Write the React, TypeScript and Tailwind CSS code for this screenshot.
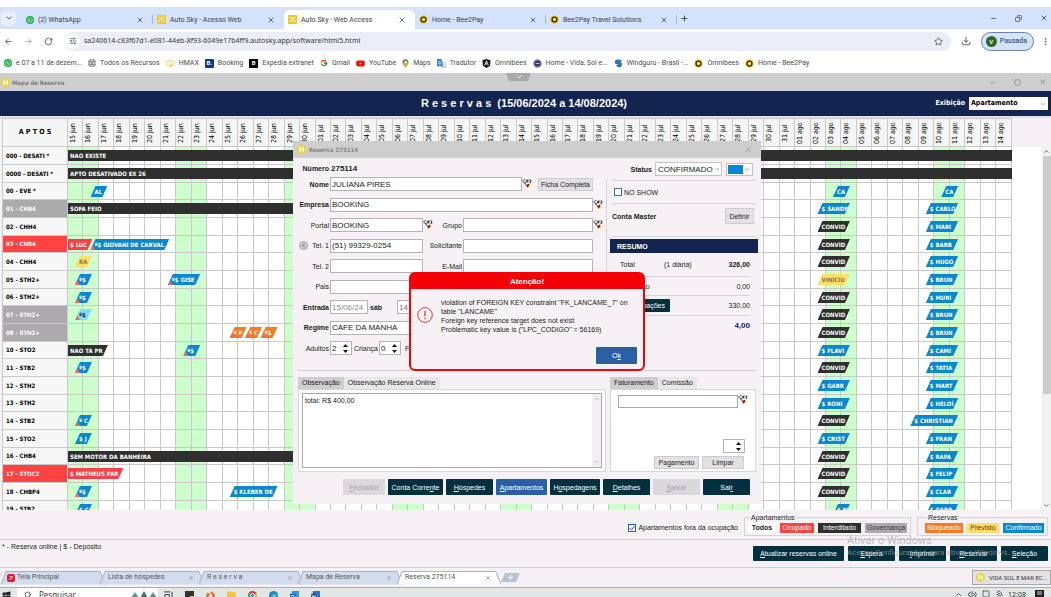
import type { ReactNode } from "react";
import { ArrowLeft, ArrowRight, ChevronDown, ChevronUp, Copy, Download, Globe, Minus, MoreVertical, Plus, RotateCw, Search, SlidersHorizontal, Square, Star, Volume2, Wifi, X } from "lucide-react";
import { FcGoogle } from "react-icons/fc";
import { FaWhatsapp, FaYoutube, FaWindows } from "react-icons/fa";
import { SiFirefoxbrowser } from "react-icons/si";

type Tone = "blue" | "black" | "red" | "orange" | "yellow" | "cyan";
type Shape = "slant" | "end" | "full";
interface Stay {
  day: number;
  span: number;
  text: string;
  tone: Tone;
  shape?: Shape;
  mark?: boolean;
}
interface Room {
  name: string;
  state?: "gray" | "red";
  stays: Stay[];
}

const days: string[] = [];
for (let i = 15; i <= 30; i++) days.push(`${i} jun`);
for (let i = 1; i <= 31; i++) days.push(`${String(i).padStart(2, "0")} jul`);
for (let i = 1; i <= 14; i++) days.push(`${String(i).padStart(2, "0")} ago`);

const toneClass: Record<Tone, string> = {
  blue: "bg-[#0988d0] text-white",
  black: "bg-[#2f2f2f] text-white",
  red: "bg-[#fb4048] text-white",
  orange: "bg-[#fb7a20] text-white",
  yellow: "bg-[#fbe065] text-[#857a4c]",
  cyan: "bg-[#82dcf8] text-[#12244f]",
};

const shapeClass: Record<Shape, string> = {
  slant: "left-[7px] pl-[4px] [clip-path:polygon(5px_0,100%_0,calc(100%-5px)_100%,0_100%)]",
  end: "left-0 pl-[2px] [clip-path:polygon(0_0,100%_0,calc(100%-5px)_100%,0_100%)]",
  full: "left-0 pl-[2px]",
};

const convid: Stay = { day: 48, span: 2.1, text: "CONVID", tone: "black" };
const aug2 = (text: string, tone: Tone = "blue"): Stay => ({ day: 48, span: 2.1, text, tone });
const aug9 = (text: string): Stay => ({ day: 55, span: 2.1, text, tone: "blue" });
const online: Stay = { day: 0, span: 1.1, text: "º$", tone: "blue", mark: true };

const rooms: Room[] = [
  { name: "000 - DESATI *", stays: [{ day: 0, span: 61, text: "NAO EXISTE", tone: "black", shape: "full" }] },
  { name: "0000 - DESATI *", stays: [{ day: 0, span: 61, text: "APTO DESATIVADO EX 26", tone: "black", shape: "full" }] },
  { name: "00 - EVE *", stays: [{ day: 1, span: 1.1, text: "AL", tone: "blue" }, { day: 49, span: 1.1, text: "CA", tone: "blue" }, { day: 56, span: 1.1, text: "CA", tone: "blue" }] },
  { name: "01 - CHB4", state: "gray", stays: [{ day: 0, span: 20, text: "SOFA FEIO", tone: "black", shape: "full" }, aug2("$ SANDR"), aug9("$ CARLO")] },
  { name: "02 - CHH4", stays: [convid, aug9("$ MARI")] },
  { name: "03 - CHB4", state: "red", stays: [{ day: 0, span: 1.55, text: "$ LUC", tone: "red", shape: "end" }, { day: 1, span: 5.1, text: "º$ GIOVANI DE CARVAL", tone: "blue", mark: true }, convid, aug9("$ BARB")] },
  { name: "04 - CHH4", stays: [{ day: 0, span: 1.1, text: "RA", tone: "yellow" }, convid, aug9("$ HUGO")] },
  { name: "05 - STH2+", stays: [online, { day: 6, span: 2.1, text: "º$ GISE", tone: "blue", mark: true }, aug2("VINÍCIU", "yellow"), aug9("$ BRUN")] },
  { name: "06 - STH2+", stays: [online, convid, aug9("$ MURI")] },
  { name: "07 - STH2+", state: "gray", stays: [{ ...online, tone: "cyan" }, convid, aug9("$ BRUN")] },
  { name: "08 - STH2+", state: "gray", stays: [{ ...online, day: 10, tone: "orange", text: "º P" }, { ...online, day: 11, tone: "orange", text: "º C" }, { ...online, day: 12, tone: "orange" }, convid, aug9("$ BRUN")] },
  { name: "10 - STO2", stays: [{ day: 0, span: 2.55, text: "NAO TA PR", tone: "black", shape: "end" }, { ...online, day: 7 }, aug2("$ FLAVI"), aug9("$ CAMI")] },
  { name: "11 - STB2", stays: [online, convid, aug9("$ TATIA")] },
  { name: "12 - STH2", stays: [aug2("$ GABR"), aug9("$ MART")] },
  { name: "13 - STH2", stays: [aug2("$ RONI"), aug9("$ HELOÍ")] },
  { name: "14 - STB2", stays: [{ ...online, text: "º C" }, convid, { day: 54, span: 3.1, text: "$ CHRISTIAN", tone: "blue" }] },
  { name: "15 - STO2", stays: [{ ...online, text: "$ J", mark: false }, aug2("$ CRIST"), aug9("$ FRAN")] },
  { name: "16 - CHB4", stays: [{ day: 0, span: 20, text: "SEM MOTOR DA BANHEIRA", tone: "black", shape: "full" }, convid, aug9("$ RAFA")] },
  { name: "17 - STOC2", state: "red", stays: [{ day: 0, span: 3.55, text: "$ MATHEUS PAR", tone: "red", shape: "end" }, convid, aug9("$ FELIP")] },
  { name: "18 - CHBP4", stays: [online, { day: 10, span: 3.1, text: "$ KLEBER DE", tone: "blue" }, convid, aug9("$ CLAR")] },
  { name: "19 - STB2", stays: [{ ...online, text: "$ C", mark: false }, { day: 49, span: 1.1, text: "$ M", tone: "blue" }, aug9("$ GABR")] },
];

function StayBar({ stay }: { stay: Stay }) {
  return (
    <span
      className={`absolute top-[3px] z-10 block h-[11px] overflow-hidden text-left leading-[11px] whitespace-nowrap ${toneClass[stay.tone]} ${shapeClass[stay.shape ?? "slant"]}`}
      style={{ width: `calc(${stay.span * 100}% + ${Math.round(stay.span)}px)` }}
    >
      {stay.mark && <span className="absolute bottom-0 left-0 h-[5px] w-[5px] bg-[#f4665e] [clip-path:polygon(40%_0,100%_100%,0_100%)]" />}
      {stay.text}
    </span>
  );
}

function ReservationMap() {
  return (
    <table className="w-full table-fixed border-separate border-spacing-0 border-t border-l border-[#c9c9c9] font-['DejaVu_Sans_Condensed','DejaVu_Sans',sans-serif] text-[6px] font-bold text-black">
      <thead>
        <tr className="h-[28px] bg-[#f5f5f5]">
          <th className="w-[65px] border-r border-b border-[#c9c9c9] p-0 text-[7px]">A P T O S</th>
          {days.map((d) => (
            <th key={d} className="border-r border-b border-[#c9c9c9] p-0">
              <span className="mx-auto block h-[24px] rotate-180 text-[7px] leading-[10px] font-normal whitespace-nowrap [writing-mode:vertical-rl]">{d}</span>
            </th>
          ))}
        </tr>
      </thead>
      <tbody>
        {rooms.map((room, r) => (
          <tr key={room.name} className={r % 3 === 2 ? "h-[17px]" : "h-[18px]"}>
            <th
              scope="row"
              className={`border-r border-b border-[#c9c9c9] p-0 pl-[3px] text-left leading-[12px] whitespace-nowrap ${room.state === "gray" ? "bg-[#acaaad] text-white" : room.state === "red" ? "bg-[#ff4242] text-white" : "bg-[#f7f7f7]"}`}
            >
              {room.name}
            </th>
            {days.map((d, i) => (
              <td key={d} className={`relative border-r border-b border-[#c9c9c9] p-0 ${i % 7 < 2 ? "bg-[#ccffcc]" : "bg-white"}`}>
                {room.stays.filter((s) => s.day === i).map((s) => <StayBar key={s.text} stay={s} />)}
              </td>
            ))}
          </tr>
        ))}
      </tbody>
    </table>
  );
}

function HotelLogo() {
  return (
    <svg viewBox="0 0 10 10" className="size-[9px] shrink-0">
      <circle cx="5" cy="5" r="5" fill="#efd32e" />
      <path d="M3 2v6M7 2v6M3 5h4" stroke="#fff" strokeWidth="1.5" />
    </svg>
  );
}

function SkyLogo() {
  return (
    <svg viewBox="0 0 10 10" className="size-[9px] shrink-0">
      <rect width="10" height="10" fill="#f7c51c" />
      <path d="M2 2l3 3 3-3M5 5v3M1 6l2 1M9 6l-2 1" stroke="#fff" strokeWidth="1.2" fill="none" />
    </svg>
  );
}

function BeeLogo() {
  return (
    <svg viewBox="0 0 10 10" className="size-[9px] shrink-0">
      <path d="M5 0l2 1 2 1 .6 3L9 8 7 9.300 5 10 3 9.300 1 8 .4 5 1 2l2-1z" fill="#f3c915" />
      <circle cx="5" cy="5" r="2.700" fill="#ffe14a" stroke="#3b2b0b" strokeWidth="1.500" />
    </svg>
  );
}

function Whats() {
  return <FaWhatsapp className="size-[8px] shrink-0 rounded-full bg-[#1fae4b] p-px text-white" />;
}

function BrowserTab({ icon, title, active, divider }: { icon: ReactNode; title: string; active?: boolean; divider?: boolean }) {
  return (
    <div className={`flex h-[19px] max-w-[131px] flex-1 items-center self-end ${active ? "rounded-t-[6px] bg-white" : ""}`}>
      <div className="flex min-w-0 flex-1 items-center gap-[4px] pr-[8px] pl-[4px]">
        {icon}
        <span className="flex-1 truncate text-[7px] leading-[10px] text-[#3b4048]">{title}</span>
        <button aria-label="Fechar guia"><X className="size-[8px] text-[#222]" /></button>
      </div>
      <span className={`h-[9px] w-px ${divider ? "bg-[#9dbaf0]" : ""}`} />
    </div>
  );
}

function Bookmark({ icon, text }: { icon: ReactNode; text: string }) {
  return (
    <a href="#" className="flex shrink-0 items-center gap-[4px] text-[7px] leading-[10px] text-[#4a4d52]">
      {icon}
      {text}
    </a>
  );
}

function Browser() {
  return (
    <header className="shrink-0 bg-white pt-[7px] font-['Roboto','Noto_Sans',sans-serif]">
      <div className="flex h-[22px] items-center bg-[#d3e3fd]">
        <button aria-label="Pesquisar guias" className="mr-[6px] ml-px flex size-[15px] items-center justify-center rounded-[5px] bg-[#e8f0fe]"><ChevronDown className="size-[8px]" /></button>
        <div className="flex min-w-0 flex-1 self-stretch">
          <BrowserTab icon={<Whats />} title="(2) WhatsApp" divider />
          <BrowserTab icon={<SkyLogo />} title="Auto.Sky - Acesso Web" />
          <BrowserTab icon={<SkyLogo />} title="Auto.Sky - Web Access" active />
          <BrowserTab icon={<BeeLogo />} title="Home - Bee2Pay" divider />
          <BrowserTab icon={<BeeLogo />} title="Bee2Pay Travel Solutions" divider />
          <button aria-label="Nova guia" className="ml-[3px]"><Plus className="size-[9px]" /></button>
        </div>
        <div className="flex items-center gap-[18px] pr-[3px]">
          <Minus className="size-[7px]" />
          <Copy className="size-[7px] -scale-x-100" />
          <X className="size-[8px]" />
        </div>
      </div>
      <div className="flex h-[24px] items-center text-[#45484d]">
        <div className="flex w-[64px] items-center gap-[11px] pl-[4px]">
          <ArrowLeft className="size-[9px]" />
          <ArrowRight className="size-[9px] text-[#999]" />
          <RotateCw className="size-[9px]" />
        </div>
        <div className="flex h-[19px] flex-1 items-center rounded-full bg-[#ebeef9] pr-[8px] pl-px">
          <span className="mr-[4px] flex size-[15px] items-center justify-center rounded-full bg-white"><SlidersHorizontal className="size-[8px]" /></span>
          <input aria-label="Endereço" className="min-w-0 flex-1 bg-transparent font-['Noto_Sans',sans-serif] text-[7px] leading-[12px] text-[#33363b] outline-none" defaultValue="sa240614-c83f67d1-e081-44eb-8f93-6049e17b4ff9.autosky.app/software/html5.html" />
          <Star className="size-[9px]" />
        </div>
        <Download className="mx-[10px] size-[10px]" />
        <button className="mr-[7px] flex h-[19px] items-center gap-[3px] rounded-full border border-[#6f85a8] bg-[#d3e3fd] pr-[6px] pl-[4px] text-[7px] font-medium text-[#35558f]">
          <span className="flex size-[11px] items-center justify-center rounded-full bg-[#2d6a22] text-[6px] text-white">V</span>
          Pausada
        </button>
        <MoreVertical className="mr-[1px] size-[9px]" />
      </div>
      <nav className="flex h-[20px] items-center gap-[6px] pl-[4px]">
        <Bookmark icon={<Whats />} text="e 07 a 11 de dezem..." />
        <Bookmark icon={<Globe className="size-[8px] rounded-full bg-[#55585c] text-white" />} text="Todos os Recursos" />
        <Bookmark icon={<svg viewBox="0 0 10 8" className="h-[7px] w-[9px]"><path d="M3 6H2a2 2 0 010-4 3 3 0 015.500 0A2 2 0 018 6H6M5 3.500V8M3.500 6L5 8l1.500-2" fill="none" stroke="#efc32b" /></svg>} text="HMAX" />
        <Bookmark icon={<span className="flex size-[9px] items-center justify-center rounded-[1px] bg-[#0b3a8c] text-[6px] font-bold text-white">B.</span>} text="Booking" />
        <Bookmark icon={<span className="flex size-[9px] items-center justify-center bg-black text-[6px] font-bold text-white">B</span>} text="Expedia extranet" />
        <Bookmark icon={<FcGoogle className="size-[8px]" />} text="Gmail" />
        <Bookmark icon={<FaYoutube className="size-[9px] text-[#ff0000]" />} text="YouTube" />
        <Bookmark icon={<svg viewBox="0 0 8 10" className="h-[9px] w-[7px]"><path d="M4 10C3 7 .5 6 .5 3.500A3.500 3.500 0 014 0z" fill="#2b8de0" /><path d="M4 10c1-3 3.500-4 3.500-6.500A3.500 3.500 0 004 0z" fill="#35a853" /><path d="M1 5.500L5 1.500 7 5 4 10z" fill="#fbbc04" opacity=".8" /><path d="M.7 2.500L4 0l1 1-3 3z" fill="#ea4335" /><circle cx="4" cy="3.500" r="1.300" fill="#fff" /></svg>} text="Maps" />
        <Bookmark icon={<svg viewBox="0 0 10 10" className="size-[9px]"><path d="M3 3h7v7H5z" fill="#c9d3e3" /><path d="M0 0h5l2 8H0z" fill="#3f7de8" /><path d="M4.500 3.500A1.500 1.500 0 104.500 5H3M6.500 5h3M8 4v1L6.500 8M7 6l2 2" stroke="#fff" strokeWidth=".7" fill="none" /></svg>} text="Tradutor" />
        <Bookmark icon={<svg viewBox="0 0 10 10" className="size-[9px]"><path d="M5 0l4.500 1.500L9 7.500 5 10 1 7.500.5 1.500z" fill="#151515" /><path d="M3 7l2-5 2 5M4 5.500h2" stroke="#fff" fill="none" /></svg>} text="Omnibees" />
        <Bookmark icon={<svg viewBox="0 0 10 10" className="size-[9px]"><circle cx="5" cy="5" r="4" fill="#3c3877" stroke="#8a7f9a" strokeWidth="1.500" /><path d="M3 5h4" stroke="#d9cfe8" /></svg>} text="Home - Vida, Sol e..." />
        <Bookmark icon={<svg viewBox="0 0 10 10" className="size-[9px]"><path d="M1 2q4-3 8 0L7 3l2 2-1 4Q4 10 2 7l3-1-4-1z" fill="#2676bf" /></svg>} text="Windguru - Brasil -..." />
        <Bookmark icon={<BeeLogo />} text="Omnibees" />
        <Bookmark icon={<BeeLogo />} text="Home - Bee2Pay" />
      </nav>
    </header>
  );
}

function LookupIcon() {
  return (
    <svg viewBox="0 0 11 11" className="size-[10px] shrink-0">
      <rect x="5" y="6" width="5" height="4" fill="#f8efa0" />
      <path d="M.5 2l3-1.500L5 2 3.500 5zM2 3l3 4" stroke="#444" fill="#fff" strokeWidth=".9" />
      <path d="M4.500 7l3-2 .8 2-2.300 2.500z" fill="#8e1717" />
      <path d="M5.500 4V1.200H7.500M5.500 2.600H7M8.300 1.200H10L9 2.400q1.300.2.900 1.200-.6.700-1.700.2" stroke="#111" strokeWidth=".9" fill="none" />
    </svg>
  );
}

function Field({ id, label, bold, value = "", className = "flex-1", labelWidth = "w-[32px]", muted }: { id: string; label: string; bold?: boolean; value?: string; className?: string; labelWidth?: string; muted?: boolean }) {
  return (
    <>
      <label htmlFor={id} className={`${labelWidth} flex shrink-0 justify-end whitespace-nowrap ${bold ? "font-bold" : ""}`}>{label}</label>
      <input id={id} defaultValue={value} className={`ml-px h-[14px] min-w-0 border border-[#b5b3b7] bg-white px-px text-[8px] outline-none ${muted ? "text-[#8a8a8a]" : "text-[#222]"} ${className}`} />
    </>
  );
}

function Spin({ id, value }: { id: string; value: string }) {
  return (
    <span className="flex h-[14px] w-[22px] items-center justify-between border border-[#b5b3b7] bg-white px-px">
      <input id={id} aria-label={id} defaultValue={value} className="w-[10px] bg-transparent text-[8px] outline-none" />
      <svg viewBox="0 0 5 9" className="mr-[2px] h-[9px] w-[5px]"><path d="M2.500 0L5 3H0zM0 6h5L2.500 9z" fill="#111" /></svg>
    </span>
  );
}

function DarkButton({ children, className = "", look = "dark" }: { children: ReactNode; className?: string; look?: "dark" | "blue" | "off" }) {
  const tone = look === "blue" ? "bg-[#2b5fa4] text-white" : look === "off" ? "bg-[#dad8da] text-[#a4a2a6]" : "bg-[#03303f] text-white";
  return <button className={`flex items-center justify-center rounded-[1px] text-[7px] leading-[9px] font-medium whitespace-pre ${tone} ${className}`}>{children}</button>;
}

const lightButton = "border border-[#cfccd0] bg-[#e3e0e4] text-[7px] leading-[9px] whitespace-nowrap";

function ReservationForm() {
  return (
    <div className="pt-[5px]">
      <div className="flex h-[10px] items-center text-[7px] font-bold"><span className="flex w-[32px] shrink-0 justify-end">Número</span><span className="pl-[2px] text-[8px]">275114</span></div>
      <div className="mt-[4px] flex h-[178px] flex-col justify-between">
        <div className="flex h-[14px] items-center">
          <Field id="nome" label="Nome" bold value="JULIANA PIRES" className="w-[192px]" />
          <LookupIcon />
          <button className={`ml-[6px] h-[13px] flex-1 ${lightButton}`}>Ficha Completa</button>
          <span className="w-[10px]" />
        </div>
        <div className="flex h-[14px] items-center"><Field id="empresa" label="Empresa" bold value="BOOKING" /><LookupIcon /></div>
        <div className="flex h-[14px] items-center">
          <Field id="portal" label="Portal" value="BOOKING" className="w-[93px]" /><LookupIcon />
          <Field id="grupo" label="Grupo" labelWidth="w-[29px]" /><LookupIcon />
        </div>
        <div className="flex h-[14px] items-center">
          <svg viewBox="0 0 9 9" className="mr-[-11px] ml-[2px] size-[9px] shrink-0"><circle cx="4.500" cy="4.500" r="4" fill="#cfcdd0" stroke="#a5a3a6" /><path d="M3 3q0 3 3 3M4 4l2-1" stroke="#888" fill="none" /></svg>
          <Field id="tel1" label="Tel. 1" value="(51) 99329-0254" className="w-[93px]" />
          <Field id="solicitante" label="Solicitante" labelWidth="w-[39px]" /><span className="w-[10px]" />
        </div>
        <div className="flex h-[14px] items-center">
          <Field id="tel2" label="Tel. 2" className="w-[93px]" />
          <Field id="email" label="E-Mail" labelWidth="w-[39px]" /><span className="w-[10px]" />
        </div>
        <div className="flex h-[14px] items-center"><Field id="pais" label="Pais" className="w-[93px]" /></div>
        <div className="flex h-[14px] items-center">
          <Field id="entrada" label="Entrada" bold value="15/06/24" className="w-[38px]" muted />
          <span className="w-[29px] pl-[2px] font-bold">sáb</span>
          <input aria-label="Hora" defaultValue="14:00" className="h-[14px] w-[30px] border border-[#b5b3b7] bg-white px-px text-[8px] text-[#777]" />
        </div>
        <div className="flex h-[14px] items-center"><Field id="regime" label="Regime" bold value="CAFE DA MANHA" className="w-[140px]" /></div>
        <div className="flex h-[14px] items-center gap-px">
          <label htmlFor="Adultos" className="w-[32px] text-right">Adultos</label><Spin id="Adultos" value="2" />
          <label htmlFor="Criança" className="w-[25px] text-right">Criança</label><Spin id="Criança" value="0" />
          <span className="pl-[3px]">Faixa</span>
        </div>
      </div>
    </div>
  );
}

function SummaryPane() {
  return (
    <div className="flex w-[148px] shrink-0 flex-col">
      <div className="flex h-[20px] items-center justify-end pr-[5px] pt-[2px]">
        <label htmlFor="status" className="pr-[3px] font-bold">Status</label>
        <span className="relative flex h-[14px] w-[67px] items-center border border-[#c5c3c7] bg-white">
          <select id="status" className="w-full appearance-none overflow-hidden pr-[8px] pl-[2px] text-[8px] outline-none"><option>CONFIRMADO</option></select>
          <ChevronDown className="absolute right-0 size-[8px] bg-white text-[#888]" strokeWidth={1.5} />
        </span>
        <button aria-label="Cor" className="ml-[4px] flex h-[13px] w-[27px] items-center justify-between border border-[#c5c3c7] bg-white px-px"><span className="h-[9px] w-[15px] bg-[#0988d0]" /><ChevronDown className="size-[8px] text-[#888]" strokeWidth={1.5} /></button>
      </div>
      <label className="mx-[2px] mt-[2px] flex h-[24px] items-center gap-[2px] border-y border-[#d6d3d7] pl-[2px]">
        <input type="checkbox" className="size-[8px] appearance-none border border-[#3c6ea5] bg-white" />NO SHOW
      </label>
      <div className="mx-[2px] flex h-[33px] items-start justify-between border-b border-[#d6d3d7] pt-[4px] pr-[2px] font-bold">
        <span className="pt-[4px]">Conta Master</span><button className={`h-[16px] w-[29px] font-normal ${lightButton}`}>Definir</button>
      </div>
      <h3 className="mt-[2px] flex h-[14px] items-center bg-[#12244f] pl-[7px] text-[7px] font-bold text-white">RESUMO</h3>
      <dl className="mx-[8px] flex flex-col">
        <div className="flex h-[24px] items-center border-b border-[#d6d3d7] pl-[2px]"><dt className="w-[44px]">Total</dt><dd className="flex-1">(1 diária)</dd><dd className="font-bold">326,00</dd></div>
        <div className="flex h-[19px] items-center justify-between border-b border-[#d6d3d7] pl-[2px]"><dt>Desconto</dt><dd>0,00</dd></div>
        <div className="flex h-[20px] items-center justify-between border-b border-[#d6d3d7]"><dt><DarkButton className="h-[13px] w-[52px] font-bold">Antecipações</DarkButton></dt><dd>330,00</dd></div>
        <div className="flex h-[18px] items-center justify-end text-[8px] font-bold text-[#17178c]"><dd>4,00</dd></div>
      </dl>
    </div>
  );
}

function PaneTabs({ first, second }: { first: string; second: string }) {
  return (
    <div role="tablist" className="flex h-[12px]">
      <button role="tab" aria-selected="true" className="bg-[#cfcdd0] px-[4px] leading-[12px]">{first}</button>
      <button role="tab" aria-selected="false" className="bg-[#e9e6ea] px-[4px] leading-[12px]">{second}</button>
    </div>
  );
}

function ErrorBox() {
  return (
    <div role="alertdialog" aria-label="Atenção!" className="absolute top-[131px] left-[116px] z-30 w-[236px] rounded-[6px] border-2 border-[#f40009] bg-[#f6f1f5]">
      <h2 className="flex h-[15px] items-center justify-center bg-[#f40009] text-[8px] font-bold text-white">Atenção!</h2>
      <div className="flex items-start pt-[9px] pl-[6px]">
        <svg viewBox="0 0 16 16" className="mt-[9px] mr-[8px] size-[16px] shrink-0"><circle cx="8" cy="8" r="7.300" fill="none" stroke="#ea3840" /><path d="M8 4v5.500M8 11v1.300" stroke="#ea3840" strokeWidth="1.300" /></svg>
        <p className="text-[7px] leading-[9px] text-[#222]">
          violation of FOREIGN KEY constraint "FK_LANCAME_7" on<br />table "LANCAME"<br />Foreign key reference target does not exist<br />Problematic key value is ("LPC_CODIGO" = 56169)
        </p>
      </div>
      <div className="flex justify-end pt-[13px] pr-[6px] pb-[5px]"><DarkButton look="blue" className="h-[17px] w-[41px]">O<u>k</u></DarkButton></div>
    </div>
  );
}

function ReservationWindow() {
  return (
    <section aria-label="Reserva 275114" className="absolute top-[23px] left-[293px] z-20 flex h-[363px] w-[468px] flex-col bg-[#f6f1f5] text-[7px] leading-[9px] text-[#222]">
      <div className="flex h-[17px] shrink-0 items-center gap-[3px] bg-[#cecece] pr-[8px] pl-[4px] font-['DejaVu_Sans_Condensed','DejaVu_Sans',sans-serif] text-[6px] font-bold text-[#858585]">
        <HotelLogo /><span className="flex-1">Reserva 275114</span><X className="size-[9px]" strokeWidth={1.5} />
      </div>
      <div className="flex h-[212px] pr-[3px] pl-[4px]">
        <div className="w-[306px]"><ReservationForm /></div>
        <span className="mt-[21px] mr-[3px] ml-[3px] w-px bg-[#d6d3d7]" />
        <SummaryPane />
      </div>
      <div className="mx-[5px] flex gap-[4px] border-t border-[#d0cdd1] pt-[6px]">
        <div className="flex-1">
          <PaneTabs first="Observação" second="Observação Reserva Online" />
          <div className="h-[83px] border border-[#d9d6da] bg-white p-[3px]">
            <div className="flex h-full border border-[#aaa8ab]">
              <textarea aria-label="Observação" className="min-w-0 flex-1 resize-none overflow-hidden p-[2px] outline-none" defaultValue="total: R$ 400,00" />
              <div className="flex w-[9px] flex-col items-center justify-between bg-[#f1eff1] py-[2px] text-[#888]"><ChevronUp className="size-[6px]" /><ChevronDown className="size-[6px]" /></div>
            </div>
          </div>
        </div>
        <div className="w-[146px]">
          <PaneTabs first="Faturamento" second="Comissão" />
          <div className="flex h-[83px] flex-col items-end border border-[#d9d6da] bg-white pt-[5px] pr-[7px]">
            <div className="flex items-start"><input aria-label="Faturamento" className="h-[13px] w-[120px] border border-[#aaa8ab]" /><LookupIcon /></div>
            <div className="mt-[31px] mr-[3px]"><Spin id="Parcelas" value="" /></div>
            <div className="mt-[3px] mr-[4px] flex gap-[3px]"><button className={`h-[13px] w-[45px] ${lightButton}`}>Pagamento</button><button className={`h-[13px] w-[42px] ${lightButton}`}>Limpar</button></div>
          </div>
        </div>
      </div>
      <div className="flex gap-[3px] pt-[7px] pr-[10px] pl-[50px]">
        <DarkButton look="off" className="h-[16px] w-[42px]">  <u>F</u>echadur</DarkButton>
        <DarkButton className="h-[16px] w-[55px]">Conta Corre<u>n</u>te</DarkButton>
        <DarkButton className="h-[16px] w-[47px]"><u>H</u>óspedes</DarkButton>
        <DarkButton look="blue" className="h-[16px] w-[51px]"><u>A</u>partamentos</DarkButton>
        <DarkButton className="h-[16px] w-[50px]">H<u>o</u>spedagens</DarkButton>
        <DarkButton className="h-[16px] w-[47px]"><u>D</u>etalhes</DarkButton>
        <DarkButton look="off" className="h-[16px] w-[47px]"><u>S</u>alvar</DarkButton>
        <DarkButton className="h-[16px] w-[47px]">Sai<u>r</u></DarkButton>
      </div>
      <ErrorBox />
    </section>
  );
}

function Legend({ title, items, pad }: { title: string; items: [string, string][]; pad: string }) {
  return (
    <fieldset className={`border border-[#d6d3d7] pt-[2px] pb-[2px] ${pad}`}>
      <legend className="ml-[2px] px-px text-[7px] leading-[7px]">{title}</legend>
      <div className="flex gap-[4px]">
        {items.map(([name, cls]) => <button key={name} className={`h-[10px] text-[7px] leading-[10px] ${cls}`}>{name}</button>)}
      </div>
    </fieldset>
  );
}

function BottomTab({ title, icon, active, plain }: { title: string; icon?: ReactNode; active?: boolean; plain?: boolean }) {
  return (
    <div className="relative flex h-[14px] w-[99px] items-center gap-[2px] pr-[5px] pl-[6px]">
      <svg viewBox="0 0 104 14" className="absolute top-0 left-0 h-[14px] w-[104px]"><path d="M0 13.500L5 .5h94l5 13" fill={active ? "#fff" : "#d3dcee"} stroke="#a4b2c9" /></svg>
      <span className="relative">{icon}</span>
      <span className="relative flex-1 whitespace-pre">{title}</span>
      {!plain && <X className="relative size-[6px] text-[#777]" />}
    </div>
  );
}

function Taskbar() {
  return (
    <div className="flex h-[10px] shrink-0 items-start overflow-hidden border-t border-[#8fb4d9] bg-[#dfe8e6] font-['Noto_Sans',sans-serif] text-[8px]">
      <FaWindows className="mt-[3px] ml-[2px] size-[9px] shrink-0" />
      <div className="ml-[6px] flex h-[14px] w-[141px] shrink-0 items-start gap-[7px] bg-white pt-[3px] pl-[7px]">
        <Search className="size-[8px]" /><span className="-mt-px flex-1 leading-[10px] text-[#444]">Pesquisar</span>
        <svg viewBox="0 0 28 10" className="h-[10px] w-[28px]"><path d="M0 8l5-7 5 7zM18 8l5-7 5 7z" fill="#5ea3a0" /><path d="M9 9l5-9 5 9z" fill="#2f7d68" /><path d="M5 4v6M14 2v8M23 4v6" stroke="#8b5b56" /></svg>
      </div>
      <div className="ml-[6px] flex items-start gap-[12px] pt-[3px]">
        <svg viewBox="0 0 10 10" className="size-[9px]"><path d="M0 1h7M1 4h5v4H1zM9 1v9" stroke="#333" fill="none" /></svg>
        <svg viewBox="0 0 9 9" className="size-[9px]"><path d="M0 0h9v9H0z" fill="#333" /><path d="M5 5h4l-4 4z" fill="#f2c230" /></svg>
        <SiFirefoxbrowser className="size-[9px] text-[#ee6a2c]" />
        <svg viewBox="0 0 10 9" className="size-[9px]"><path d="M0 0h4l1 1h5v8H0z" fill="#f5c542" /><path d="M2 6h6v3H2z" fill="#3d8fd8" /></svg>
        <svg viewBox="0 0 10 10" className="size-[9px]"><circle cx="5" cy="5" r="5" fill="#33a455" /><path d="M.7 2.500a5 5 0 018.600 0L5 5z" fill="#e13f33" /><path d="M9.300 2.500A5 5 0 015 10l2-5z" fill="#f5c22e" /><circle cx="5" cy="5" r="2.200" fill="#3b7ded" stroke="#fff" /></svg>
        <svg viewBox="0 0 10 10" className="size-[9px]"><circle cx="5" cy="5" r="5" fill="#1c86cf" /><path d="M2 6q3-5 7-1-3 3-5 1z" fill="#52cfa0" /></svg>
        <svg viewBox="0 0 10 10" className="size-[9px]"><path d="M2 0h8v9H2z" fill="#2d9be0" /><path d="M0 3h6v6H0z" fill="#0c5fae" /><circle cx="3" cy="6" r="1.500" stroke="#fff" fill="none" /></svg>
        <svg viewBox="0 0 10 10" className="size-[9px]"><path d="M2 0h8v9H2z" fill="#2f72ca" /><path d="M0 3h6v6H0z" fill="#123f8a" /><path d="M1 4l1 4 1-3 1 3 1-4" stroke="#fff" fill="none" strokeWidth=".8" /></svg>
      </div>
      <div className="ml-auto flex items-start gap-[5px] pt-[2px] pr-[7px] text-[#333]">
        <ChevronUp className="size-[9px]" /><Volume2 className="size-[9px]" /><Square className="size-[8px]" /><Wifi className="size-[8px] rotate-45" />
        <span className="text-[7px] leading-[10px]">12:08</span>
        <svg viewBox="0 0 9 9" className="ml-[4px] size-[9px]"><path d="M0 0h9v7H5L3 9V7H0z" fill="#222" /><path d="M2 2h5M2 4h5" stroke="#fff" strokeWidth=".8" /></svg>
      </div>
    </div>
  );
}

export default function App() {
  return (
    <div className="flex h-screen flex-col overflow-hidden bg-[#f6f1f5] font-['Liberation_Sans',Arial,sans-serif] text-[7px] leading-[9px] text-[#222]">
      <Browser />
      <div className="relative flex h-[18px] shrink-0 items-center gap-[2px] bg-[#cecece] pr-[4px] pl-px font-['DejaVu_Sans_Condensed','DejaVu_Sans',sans-serif] text-[6px] font-bold text-[#7d7d7d]">
        <HotelLogo /><span className="flex-1">Mapa de Reserva</span>
        <div className="flex items-center gap-[18px]"><Minus className="size-[7px]" /><Square className="size-[7px]" /><X className="size-[8px]" /></div>
        <button aria-label="Mostrar menu" className="absolute top-0 left-[506px] flex h-[8px] w-[25px] items-center justify-center bg-[#a9a9a9] text-white [clip-path:polygon(0_0,100%_0,calc(100%-3px)_100%,3px_100%)]"><ChevronDown className="size-[8px]" strokeWidth={3} /></button>
      </div>
      <div className="grid h-[25px] shrink-0 grid-cols-[1fr_auto_1fr] items-center bg-[#12244f] pr-[3px] text-white">
        <span />
        <h1 className="text-[11px] font-bold whitespace-pre">R e s e r v a s  (15/06/2024 a 14/08/2024)</h1>
        <div className="flex items-center justify-end gap-[4px] font-['DejaVu_Sans_Condensed','DejaVu_Sans',sans-serif] font-bold">
          <label htmlFor="exibicao">Exibição</label>
          <span className="relative flex h-[13px] w-[79px] items-center bg-white text-black">
            <select id="exibicao" className="w-full appearance-none pl-[2px] text-[7px] outline-none"><option>Apartamento</option></select>
            <ChevronDown className="absolute right-[1px] size-[8px] text-[#888]" strokeWidth={1.5} />
          </span>
        </div>
      </div>
      <main className="relative min-h-0 flex-1 border-t-2 border-[#e5dfe4]">
        <div className="flex h-full overflow-hidden pl-[2px]">
          <div className="min-w-0 flex-1"><ReservationMap /></div>
          <div className="mt-[29px] w-[30px] bg-white" />
          <div className="mt-[29px] flex w-[9px] flex-col items-center bg-[#f1f1f1]">
            <ChevronUp className="my-px size-[7px]" />
            <div className="h-[238px] w-[8px] bg-[#cdcdcd]" />
            <ChevronDown className="mt-auto mb-px size-[7px]" />
          </div>
        </div>
        <ReservationWindow />
      </main>
      <div className="flex h-[29px] shrink-0 items-center justify-end gap-[6px] pr-[3px]">
        <label className="mt-[6px] flex items-center gap-[2px]">
          <span className="relative flex"><input type="checkbox" defaultChecked className="size-[8px] appearance-none border border-[#2b5fa4] bg-white" /><svg viewBox="0 0 8 8" className="absolute size-[8px]"><path d="M1.500 4l2 2 3-4" stroke="#2b5fa4" fill="none" /></svg></span>
          Apartamentos fora da ocupação
        </label>
        <Legend pad="px-[3px]" title="Apartamentos" items={[["Todos", "w-[28px] bg-white font-bold"], ["Ocupado", "w-[34px] bg-[#ff4242] text-white"], ["Interditado", "w-[43px] bg-[#2f2f2f] text-white"], ["Governança", "w-[42px] bg-[#acaaad] text-[#333]"]]} />
        <Legend pad="pr-[3px] pl-[7px]" title="Reservas" items={[["Bloqueado", "w-[38px] bg-[#fb7a20] text-white"], ["Previsto", "w-[32px] bg-[#fbe065] text-[#7a2a1a]"], ["Confirmado", "w-[41px] bg-[#0988d0] text-white"]]} />
      </div>
      <div className="relative flex h-[29px] shrink-0 items-start justify-between border-y border-[#d0cdd1] pt-[6px] pr-[3px] pl-[2px]">
        <span className="-mt-[4px] text-[7px]">* - Reserva online | $ - Depósito</span>
        <div className="flex gap-[4px]">
          <DarkButton className="h-[15px] w-[91px]"><u>A</u>tualizar reservas online</DarkButton>
          <DarkButton className="h-[15px] w-[47px]"><u>E</u>spera</DarkButton>
          <DarkButton className="h-[15px] w-[47px]"><u>I</u>mprimir</DarkButton>
          <DarkButton className="h-[15px] w-[47px]"><u>R</u>eservar</DarkButton>
          <DarkButton className="h-[15px] w-[47px]"><u>S</u>eleção</DarkButton>
        </div>
        <div className="pointer-events-none absolute -top-[5px] right-[38px] w-[166px] font-['Roboto','Noto_Sans',sans-serif] whitespace-nowrap text-[#a8a4a8]/70">
          <p className="text-[11px] leading-[12px]">Ativar o Windows</p>
          <p className="text-[8px] leading-[12px]">Acesse Configurações para ativar o Windows.</p>
        </div>
      </div>
      <div className="flex h-[19px] shrink-0 items-center justify-between pl-px font-['Roboto','Noto_Sans',sans-serif] text-[7px] text-[#555]">
        <div className="flex items-center">
          <BottomTab plain title="Tela Principal" icon={<span className="flex size-[8px] items-center justify-center rounded-[2px] bg-[#e3202a] text-[6px] font-bold text-white italic">7</span>} />
          <BottomTab title="Lista de hóspedes" />
          <BottomTab title="R e s e r v a" />
          <BottomTab title="Mapa de Reserva" />
          <BottomTab title="Reserva 275114" active />
          <button aria-label="Nova aba" className="ml-[5px] flex h-[9px] w-[19px] items-center justify-center bg-[#b6c3d6] text-white [clip-path:polygon(4px_0,100%_0,calc(100%-4px)_100%,0_100%)]"><Plus className="size-[7px]" strokeWidth={4} /></button>
        </div>
        <div className="flex h-[15px] w-[79px] items-center gap-[4px] border border-[#a9a7aa] bg-[#e3e1e4] pl-[3px] text-[6px] whitespace-nowrap text-[#333]"><HotelLogo />VIDA SOL E MAR EC...</div>
      </div>
      <Taskbar />
    </div>
  );
}
